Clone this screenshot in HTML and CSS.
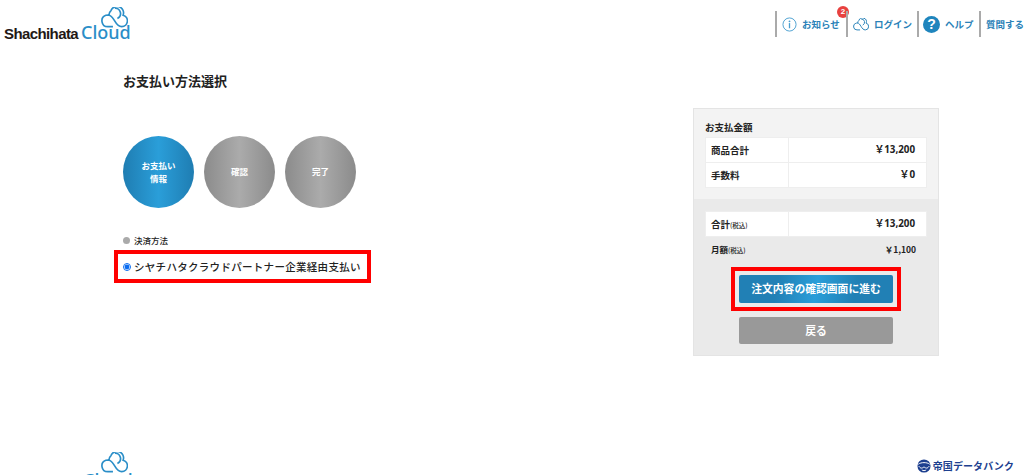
FILE: index.html
```html
<!DOCTYPE html>
<html lang="ja">
<head>
<meta charset="utf-8">
<title>お支払い方法選択</title>
<link rel="stylesheet" href="styles.css">
</head>
<body>
<svg class="sprite" width="0" height="0" aria-hidden="true">
  <symbol id="cloud" viewBox="0 0 26 20">
    <path d="M6.500 18.800A5.600 5.600 0 0 1 4.700 7.900 8 8 0 0 1 6.700 7.600C10 7.600 11 10 13 13 15 16.500 17 18.800 20 18.800A5.600 5.600 0 0 0 21.300 7.800 A6.200 6.200 0 0 0 9.600 3.300 6.300 6.300 0 0 0 7.600 7.700 M6.500 18.800H11.500 M13.300 1.100A5.200 5.200 0 0 1 15.800 11" fill="none" stroke="currentColor" stroke-width="1.600"/>
  </symbol>
</svg>
<header class="site-header">
  <a class="logo">
    <span class="logo-name">Shachihata</span><span class="logo-cloud">Cloud</span>
    <svg class="logo-icon"><use href="#cloud"/></svg>
  </a>
  <nav class="nav">
    <a class="nav-item nav-news">
      <svg class="nav-icon" viewBox="0 0 16 16"><circle cx="8" cy="8" r="7" fill="none" stroke="currentColor" stroke-width="1"/><circle cx="8" cy="4.600" r="1" fill="currentColor"/><rect x="7.300" y="6.500" width="1.400" height="5.500" fill="currentColor"/></svg>
      <span>お知らせ</span><b class="badge">2</b>
    </a>
    <a class="nav-item nav-login">
      <svg class="nav-cloud"><use href="#cloud"/></svg>
      <span>ログイン</span>
    </a>
    <a class="nav-item nav-help"><i class="help-icon">?</i><span>ヘルプ</span></a>
    <a class="nav-item nav-faq"><span>質問する</span></a>
  </nav>
</header>
<main class="content">
  <section class="left">
    <h1 class="title">お支払い方法選択</h1>
    <ol class="steps">
      <li class="step step-active">お支払い<br>情報</li>
      <li class="step">確認</li>
      <li class="step">完了</li>
    </ol>
    <p class="method-label">決済方法</p>
    <label class="method-box"><input class="radio" type="radio" checked>シヤチハタクラウドパートナー企業経由支払い</label>
  </section>
  <aside class="panel">
    <div class="panel-top">
      <h2 class="panel-title">お支払金額</h2>
      <div class="table">
        <div class="row"><span class="cell-head">商品合計</span><span class="cell-val">￥13,200</span></div>
        <div class="row"><span class="cell-head">手数料</span><span class="cell-val">￥0</span></div>
      </div>
    </div>
    <div class="panel-bottom">
      <div class="table">
        <div class="row"><span class="cell-head">合計<small>(税込)</small></span><span class="cell-val">￥13,200</span></div>
      </div>
      <div class="monthly"><span>月額<small>(税込)</small></span><span>￥1,100</span></div>
      <div class="btn-frame"><a class="btn btn-primary">注文内容の確認画面に進む</a></div>
      <a class="btn btn-back">戻る</a>
    </div>
  </aside>
</main>
<footer class="site-footer">
  <a class="logo logo-footer">
    <span class="logo-name">Shachihata</span><span class="logo-cloud">Cloud</span>
    <svg class="logo-icon"><use href="#cloud"/></svg>
  </a>
  <div class="tdb">
    <svg class="tdb-icon" viewBox="0 0 16 16"><circle cx="8" cy="8" r="7.500" fill="#1d3f8f"/><path d="M1.500 6c3-2.500 10-2.500 13 0M2 8c2 3 3.500 3 6 1 2.500 2 4 2 6-1M5.500 12.500c1.500 1 3.500 1 5 0" fill="none" stroke="#fff" stroke-width="1.100"/></svg>
    <span>帝国データバンク</span>
  </div>
</footer>
</body>
</html>
```
FILE: styles.css
```css
* { box-sizing: border-box; }
html, body { margin: 0; height: 475px; overflow: hidden; }
body {
  background: #fff;
  color: #222;
  font-family: "Noto Sans CJK JP", "Noto Sans", sans-serif;
  font-size: 11px;
}
.sprite { position: absolute; }

.site-header { display: flex; justify-content: space-between; height: 50px; }
.logo { display: block; position: relative; width: 135px; height: 50px; padding: 20px 0 0 4px; white-space: nowrap; line-height: 24px; }
.logo-name { font: bold 15px/24px "Liberation Sans", sans-serif; letter-spacing: -.6px; color: #231815; }
.logo-cloud { font: 500 18px/24px "Noto Sans", sans-serif; color: #2a8ec8; margin-left: 3px; }
.logo-icon { position: absolute; left: 101px; top: 7px; width: 27px; height: 21px; color: #2a8ec8; }

.nav { display: flex; padding-top: 11px; }
.nav-item {
  position: relative;
  display: flex;
  align-items: center;
  height: 26px;
  border-left: 2px solid #aaa;
  color: #2a82b8;
  font-size: 9.500px;
  font-weight: 700;
  white-space: nowrap;
}
.nav-news { width: 71px; padding-left: 5px; gap: 5px; }
.nav-login { width: 71px; padding-left: 5px; gap: 5px; }
.nav-help { width: 62px; padding-left: 4px; gap: 5px; }
.nav-faq { width: 45px; padding-left: 5px; }
.nav-icon { width: 15px; height: 15px; color: #4a9fd0; }
.nav-cloud { width: 16px; height: 13px; color: #2a82b8; }
.help-icon {
  width: 17px; height: 17px; border-radius: 50%;
  background: #1f85bd; color: #fff;
  font: bold 14px/17px "Liberation Sans", sans-serif;
  text-align: center;
}
.badge {
  position: absolute; left: 60px; top: -5px;
  width: 12px; height: 12px; border-radius: 50%;
  background: #e8413f; color: #fff;
  font: bold 8px/12px "Liberation Sans", sans-serif;
  text-align: center;
}

.content { display: flex; justify-content: space-between; height: 376px; padding: 0 85px 0 114px; }
.left { width: 257px; }
.title { margin: 21px 0 0 9px; font-size: 13px; line-height: 20px; font-weight: 700; }
.steps { display: flex; gap: 10px; list-style: none; margin: 45px 0 0 9px; padding: 0; }
.step {
  display: flex; align-items: center; justify-content: center;
  width: 71px; height: 72px; border-radius: 50%;
  background: linear-gradient(90deg, #8b8b8b, #ababab 50%, #8b8b8b);
  color: #fff; font-size: 8.500px; font-weight: 700; line-height: 13.500px; text-align: center;
}
.step-active { background: linear-gradient(90deg, #1f7db2, #2a9ed9 50%, #1f7db2); }
.method-label {
  display: flex; align-items: center; gap: 4px;
  margin: 25px 0 0 9px; height: 14px;
  font-size: 8.500px; font-weight: 500;
}
.method-label::before { content: ""; width: 7px; height: 7px; border-radius: 50%; background: #aaa; }
.method-box {
  display: flex; align-items: center;
  width: 257px; height: 33px; margin-top: 3px; padding-left: 8px;
  border: 4px solid #f00;
  font-size: 10.500px; font-weight: 500; letter-spacing: .3px; white-space: nowrap;
}
.radio { width: 8px; height: 8px; margin: 0 3px 0 -3px; accent-color: #0a6cf0; }

.panel { width: 246px; height: 248px; margin-top: 58px; border: 1px solid #e4e4e4; background: #eaeaea; }
.panel-top { height: 90px; padding: 11px 11px 0; background: #f3f3f3; }
.panel-title { margin: 0; height: 17px; font-size: 9.500px; line-height: 15px; font-weight: 700; }
.panel-bottom { padding: 12px 11px 0; }
.table { display: flex; flex-direction: column; background: #fff; border: 1px solid #eee; }
.row { display: flex; height: 24px; line-height: 24px; font-size: 9.500px; font-weight: 700; }
.row + .row { height: 25px; border-top: 1px solid #eee; }
.cell-head { width: 83px; padding-left: 5px; border-right: 1px solid #eee; }
.cell-val { flex: 1; padding-right: 11px; text-align: right; font-family: "Noto Sans", "Noto Sans CJK JP", sans-serif; font-size: 9.800px; }
small { font-size: 6.500px; font-weight: 500; }
.monthly { display: flex; justify-content: space-between; height: 24px; padding: 0 11px 0 6px; line-height: 24px; font-size: 8.500px; font-weight: 700; }
.btn-frame { width: 170px; height: 44px; margin: 6px auto 0; padding: 4px; border: 4px solid #f00; }
.btn {
  display: block; width: 154px; height: 28px; border-radius: 2px;
  color: #fff; font-size: 10.800px; font-weight: 700; line-height: 27px; text-align: center;
}
.btn-primary { background: linear-gradient(100deg, #2180b5 25%, #2a9ed9 50%, #2180b5 75%); }
.btn-back { margin: 6px auto 0; height: 27px; background: #999; }

.site-footer { display: flex; justify-content: space-between; height: 49px; }
.logo-footer { width: 135px; padding-top: 42px; margin-left: 2px; }
.logo-footer .logo-icon { top: 26px; left: 99px; }
.tdb { display: flex; align-items: flex-start; gap: 2px; padding: 33px 10px 0 0; color: #1d3f8f; font-size: 10px; line-height: 14px; font-weight: 700; letter-spacing: .1px; }
.tdb-icon { width: 14px; height: 14px; }
```
